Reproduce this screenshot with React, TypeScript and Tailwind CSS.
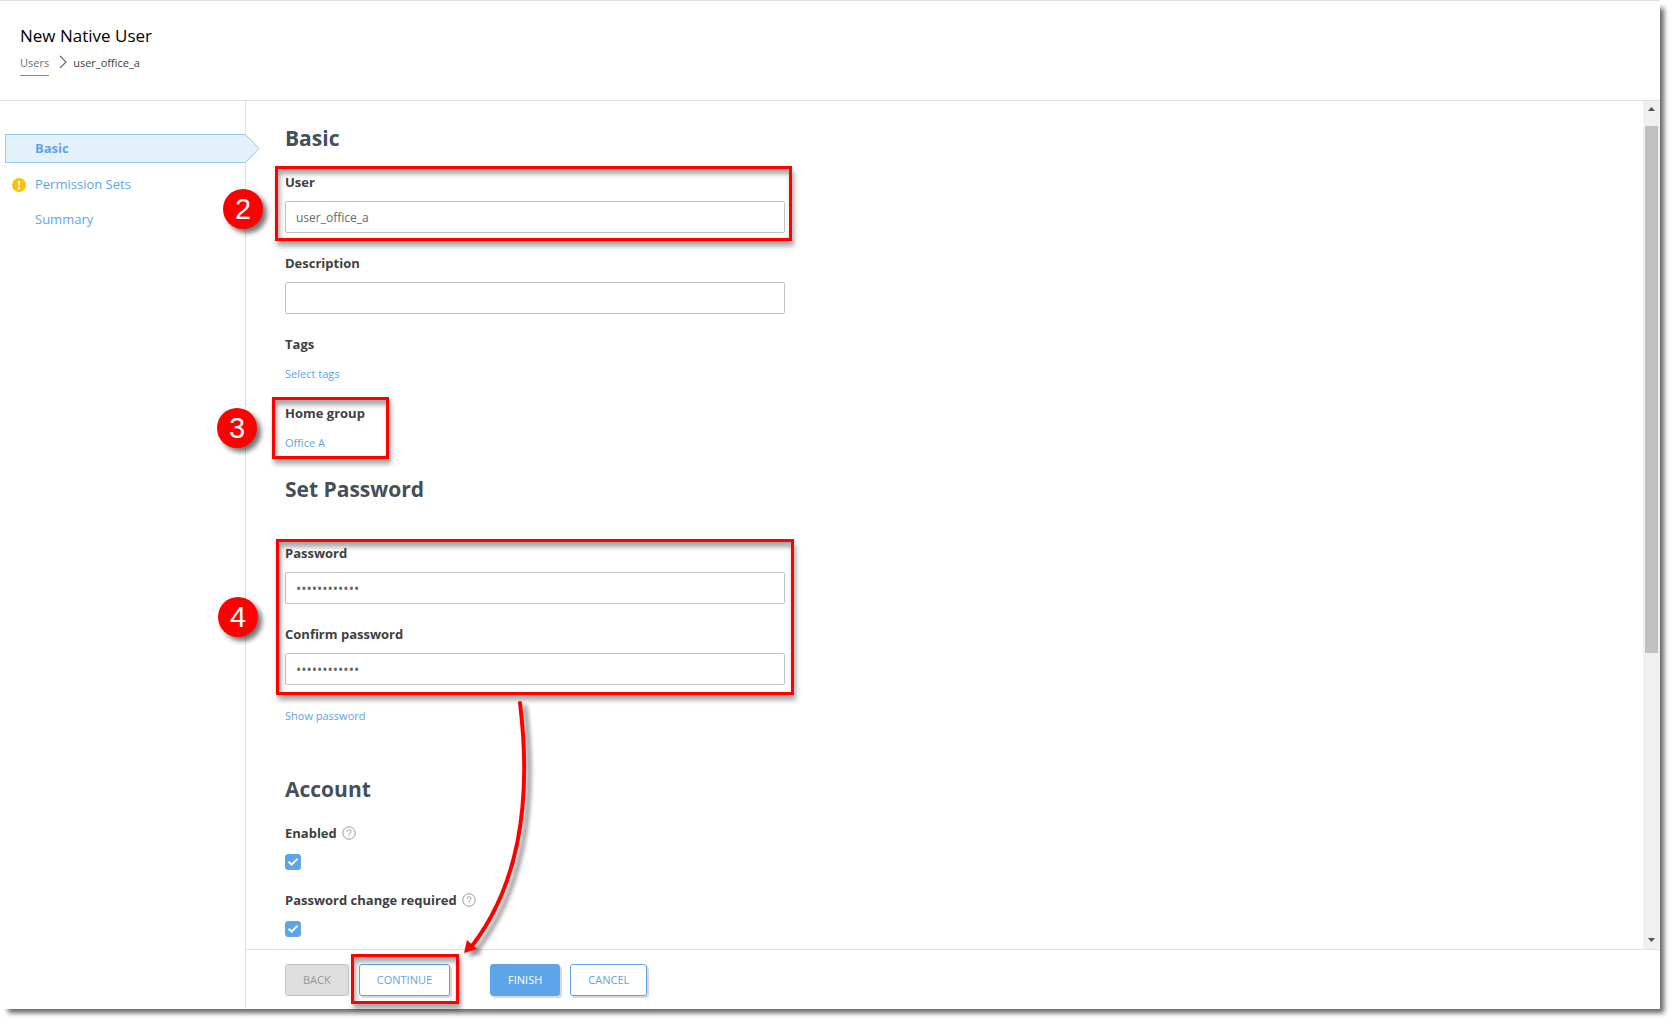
import { useState } from "react";
import type { ReactNode } from "react";

const boxClass =
  "pointer-events-none absolute z-10 border-[3px] border-[#ff0000] shadow-[2px_5px_5px_rgba(0,0,0,0.35),inset_2px_5px_5px_rgba(0,0,0,0.35)]";

function Step({ n, className }: { n: number; className: string }) {
  return (
    <span
      className={`pointer-events-none absolute z-10 flex size-10 items-center justify-center rounded-full bg-[#ff0000] font-['Liberation_Sans',sans-serif] text-[29px] leading-none text-white shadow-[4px_4px_5px_rgba(0,0,0,0.55)] ${className}`}
    >
      {n}
    </span>
  );
}

function Heading({ children }: { children: ReactNode }) {
  return <h2 className="text-[21px] leading-8 font-bold text-[#444f59]">{children}</h2>;
}

function TextField({ id, label, type = "text", value }: { id: string; label: string; type?: "text" | "password"; value: string }) {
  const [text, setText] = useState(value);
  return (
    <div className="flex flex-col gap-[7px]">
      <label htmlFor={id} className="text-[13px] leading-6 font-bold text-[#404040]">
        {label}
      </label>
      <input
        id={id}
        type={type}
        value={text}
        onChange={(e) => setText(e.target.value)}
        className={`h-8 w-full rounded-xs border border-[#c2c2c2] bg-white px-2.5 text-[#666] outline-none focus:border-[#5ea4e8] ${type === "password" ? "text-[14px]" : "text-[12px]"}`}
      />
    </div>
  );
}

function LinkField({ label, link }: { label: string; link: string }) {
  return (
    <div className="flex flex-col items-start gap-2">
      <span className="text-[13px] leading-6 font-bold text-[#404040]">{label}</span>
      <a href="#" className="text-[11px] leading-5 text-[#5ea4e8]">
        {link}
      </a>
    </div>
  );
}

function CheckField({ id, label }: { id: string; label: string }) {
  return (
    <div className="flex flex-col items-start gap-[9px]">
      <div className="flex items-center gap-[5px]">
        <label htmlFor={id} className="text-[13px] leading-6 font-bold text-[#404040]">
          {label}
        </label>
        <svg viewBox="0 0 14 14" className="size-3.5" fill="none" stroke="#999" role="img" aria-label="Help">
          <circle cx="7" cy="7" r="6.2" />
          <path d="M5.1 5.7a1.9 1.9 0 1 1 2.9 1.5c-.7.4-1 .7-1 1.3" />
          <path d="M7 9.4v1.1" />
        </svg>
      </div>
      <span className="relative flex size-4">
        <input
          id={id}
          type="checkbox"
          defaultChecked
          className="peer size-4 appearance-none rounded-[3px] border border-[#5ea4e8] checked:bg-[#5ea4e8]"
        />
        <svg
          viewBox="0 0 16 16"
          className="pointer-events-none absolute inset-0 hidden peer-checked:block"
          fill="none"
          stroke="#fff"
          strokeWidth="2"
        >
          <path d="M3.6 7.8 6.6 10.6l6-6" />
        </svg>
      </span>
    </div>
  );
}

const outline =
  "h-8 rounded-[3px] border border-[#5ea4e8] bg-white px-[17px] text-[11px] text-[#5ea4e8] shadow-[2px_2px_0_rgba(0,0,0,0.15)]";

export default function App() {
  return (
    <div className="flex min-h-screen flex-col bg-white pr-[15px] pb-[15px] font-['Open_Sans','Noto_Sans',sans-serif]">
      <div className="flex grow flex-col border-t border-[#e0e0e0] bg-white shadow-[6px_6px_5px_-2px_rgba(0,0,0,0.6)]">
        <header className="h-[100px] border-b border-[#e0e0e0] px-5 pt-[23px]">
          <h1 className="text-[17px] leading-6 text-black">New Native User</h1>
          <nav aria-label="Breadcrumb" className="flex items-start pt-[3px] text-[11px] leading-6 text-[#404040]">
            <a href="#" className="border-b border-[#888] text-[#6b6b76]">
              Users
            </a>
            <svg viewBox="0 0 8 14" className="mt-1 mr-1.5 ml-2.5 h-3.5 w-2" fill="none" stroke="#66707a" strokeWidth="1.2">
              <path d="m1 1 6 6-6 6" />
            </svg>
            <span>user_office_a</span>
          </nav>
        </header>

        <div className="flex grow">
          <nav aria-label="Steps" className="w-[246px] shrink-0 border-r border-[#e0e0e0] pt-[33px] pl-[5px] text-[13px] text-[#5ea4e8]">
            <a
              href="#"
              aria-current="step"
              className="relative flex h-[29px] items-center border border-r-0 border-[#8fcaf0] bg-[#e3f1fb] pl-[29px] font-bold"
            >
              Basic
              <svg viewBox="0 0 15 29" className="absolute -top-px left-full z-10 h-[29px] w-[15px]" aria-hidden="true">
                <path d="M0 .5h.5l13.5 14-13.5 14H0z" fill="#e3f1fb" />
                <path d="M0 .5h.5l13.5 14-13.5 14H0" fill="none" stroke="#8fcaf0" />
              </svg>
            </a>
            <a href="#" className="mt-1 flex h-[35px] items-center gap-[9px] pl-[7px]">
              <svg viewBox="0 0 14 14" className="size-3.5" role="img" aria-label="Warning">
                <circle cx="7" cy="7" r="7" fill="#fbc108" />
                <path d="M5.8 3h2.4l-.4 5H6.2z" fill="#fff" />
                <circle cx="7" cy="10.2" r="1.2" fill="#fff" />
              </svg>
              Permission Sets
            </a>
            <a href="#" className="flex h-[35px] items-center pl-[30px]">
              Summary
            </a>
          </nav>

          <div className="flex min-w-0 grow flex-col">
            <div className="flex grow">
              <main className="flex min-w-0 grow flex-col px-[39px] pt-[21px] pb-3">
                <form id="user" className="flex w-full max-w-[500px] flex-col" onSubmit={(e) => e.preventDefault()}>
                  <Heading>Basic</Heading>
                  <div className="relative mt-4">
                    <TextField id="name" label="User" value="user_office_a" />
                    <div className={`${boxClass} -top-1 -right-[7px] -bottom-2 -left-2.5`} />
                    <Step n={2} className="top-[19px] -left-[62px]" />
                  </div>
                  <div className="mt-[18px]">
                    <TextField id="description" label="Description" value="" />
                  </div>
                  <div className="mt-[18px]">
                    <LinkField label="Tags" link="Select tags" />
                  </div>
                  <div className="relative mt-[17px]">
                    <LinkField label="Home group" link="Office A" />
                    <div className={`${boxClass} -top-1 -bottom-1.5 -left-[13px] w-[117px]`} />
                    <Step n={3} className="top-[7px] -left-[68px]" />
                  </div>
                  <div className="mt-5">
                    <Heading>Set Password</Heading>
                  </div>
                  <div className="relative mt-9 flex flex-col gap-[18px]">
                    <TextField id="password" label="Password" type="password" value="officeauser1" />
                    <TextField id="confirm" label="Confirm password" type="password" value="officeauser1" />
                    <div className={`${boxClass} -top-[2px] -right-[9px] -bottom-2.5 -left-[9px]`} />
                    <Step n={4} className="top-14 -left-[67px]" />
                    <svg
                      viewBox="0 0 80 260"
                      className="pointer-events-none absolute top-[158px] left-[170px] z-20 h-[260px] w-20 drop-shadow-[5px_4px_2px_rgba(0,0,0,0.45)]"
                      aria-hidden="true"
                    >
                      <path d="M65 4Q84 160 17 247" fill="none" stroke="#f00" strokeWidth="4" strokeLinecap="round" />
                      <path d="m9 254 3-13 10 9z" fill="#f00" />
                    </svg>
                  </div>
                  <button type="button" className="mt-[21px] self-start text-[11px] leading-5 text-[#5ea4e8]">
                    Show password
                  </button>
                  <div className="mt-[47px]">
                    <Heading>Account</Heading>
                  </div>
                  <div className="mt-4 flex flex-col gap-[18px]">
                    <CheckField id="enabled" label="Enabled" />
                    <CheckField id="change" label="Password change required" />
                  </div>
                </form>
              </main>
              <div className="flex w-[17px] shrink-0 flex-col items-center gap-3.5 bg-[#f0f0f0] py-1.5" aria-hidden="true">
                <svg viewBox="0 0 7 5" className="h-[5px] w-[7px] shrink-0" fill="#505050">
                  <path d="M3.5 0 7 4H0z" />
                </svg>
                <div className="w-[13px] grow-0 basis-[527px] bg-[#c1c1c1]" />
                <svg viewBox="0 0 7 5" className="mt-auto h-[5px] w-[7px] shrink-0" fill="#505050">
                  <path d="M3.5 4 0 0h7z" />
                </svg>
              </div>
            </div>

            <footer className="flex h-[60px] shrink-0 items-start border-t border-[#e0e0e0] px-[39px] pt-3.5">
              <button disabled className="h-8 rounded-[3px] border border-[#c4c4c4] bg-[#dedede] px-[17px] text-[11px] text-[#999]">
                BACK
              </button>
              <div className="relative ml-2.5">
                <button className={outline}>CONTINUE</button>
                <div className={`${boxClass} -top-2.5 -right-[9px] -bottom-2 -left-2`} />
              </div>
              <button className="ml-10 h-8 rounded-[3px] border border-[#5ea4e8] bg-[#5ea4e8] px-[17px] text-[11px] text-white shadow-[2px_2px_0_rgba(0,0,0,0.15)]">
                FINISH
              </button>
              <button className={`ml-2.5 ${outline}`}>CANCEL</button>
            </footer>
          </div>
        </div>
      </div>
    </div>
  );
}
